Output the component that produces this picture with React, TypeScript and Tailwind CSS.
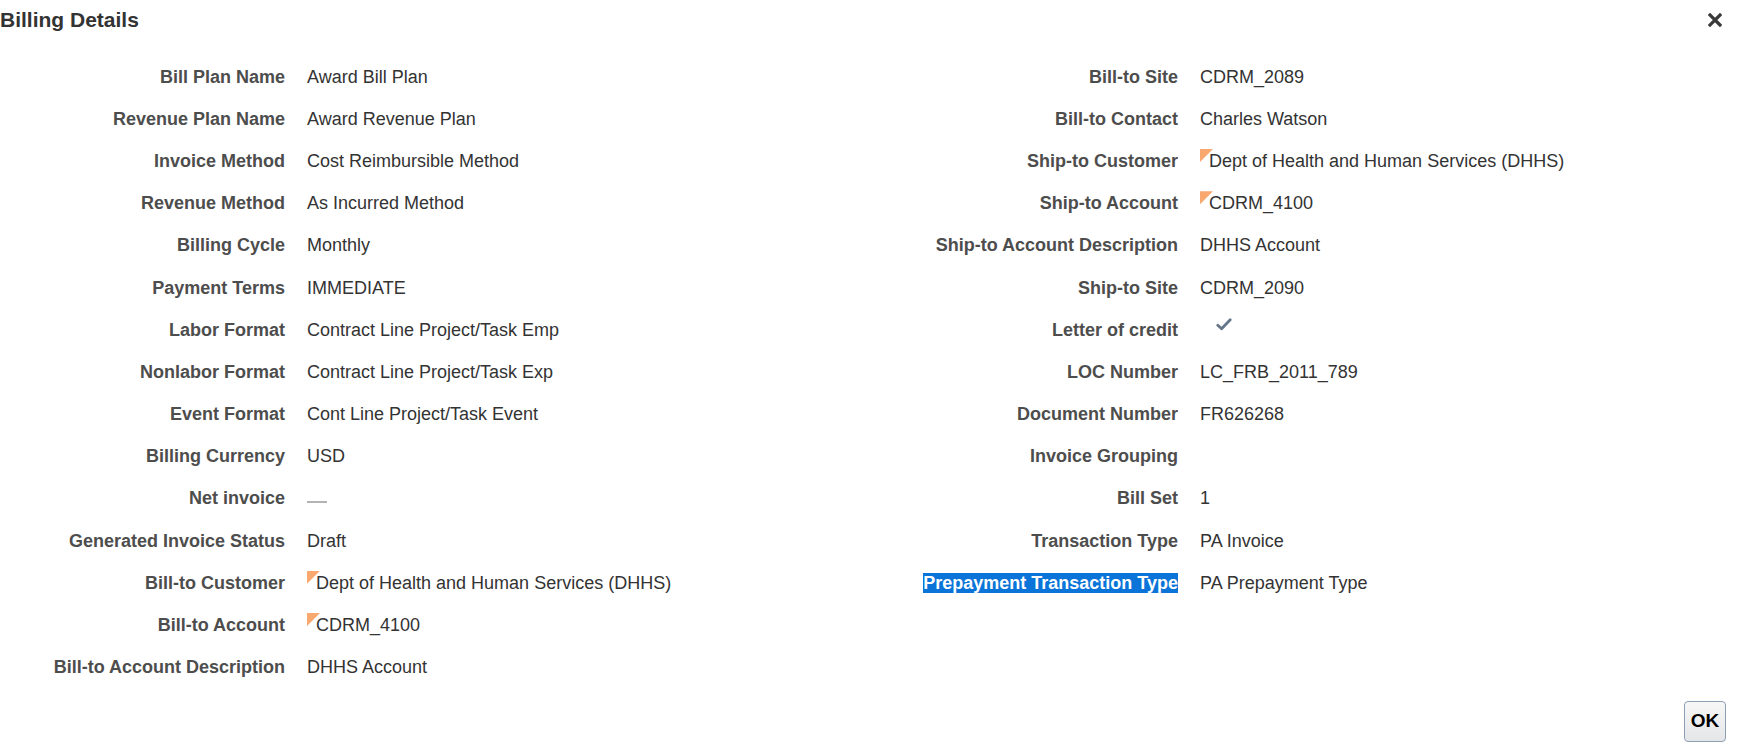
import React from "react";

type Field = {
  label: string;
  value?: string;
  kind?: "text" | "flag" | "check" | "dash" | "empty";
  selected?: boolean;
};

const leftFields: Field[] = [
  { label: "Bill Plan Name", value: "Award Bill Plan" },
  { label: "Revenue Plan Name", value: "Award Revenue Plan" },
  { label: "Invoice Method", value: "Cost Reimbursible Method" },
  { label: "Revenue Method", value: "As Incurred Method" },
  { label: "Billing Cycle", value: "Monthly" },
  { label: "Payment Terms", value: "IMMEDIATE" },
  { label: "Labor Format", value: "Contract Line Project/Task Emp" },
  { label: "Nonlabor Format", value: "Contract Line Project/Task Exp" },
  { label: "Event Format", value: "Cont Line Project/Task Event" },
  { label: "Billing Currency", value: "USD" },
  { label: "Net invoice", kind: "dash" },
  { label: "Generated Invoice Status", value: "Draft" },
  { label: "Bill-to Customer", value: "Dept of Health and Human Services (DHHS)", kind: "flag" },
  { label: "Bill-to Account", value: "CDRM_4100", kind: "flag" },
  { label: "Bill-to Account Description", value: "DHHS Account" },
];

const rightFields: Field[] = [
  { label: "Bill-to Site", value: "CDRM_2089" },
  { label: "Bill-to Contact", value: "Charles Watson" },
  { label: "Ship-to Customer", value: "Dept of Health and Human Services (DHHS)", kind: "flag" },
  { label: "Ship-to Account", value: "CDRM_4100", kind: "flag" },
  { label: "Ship-to Account Description", value: "DHHS Account" },
  { label: "Ship-to Site", value: "CDRM_2090" },
  { label: "Letter of credit", kind: "check" },
  { label: "LOC Number", value: "LC_FRB_2011_789" },
  { label: "Document Number", value: "FR626268" },
  { label: "Invoice Grouping", kind: "empty" },
  { label: "Bill Set", value: "1" },
  { label: "Transaction Type", value: "PA Invoice" },
  { label: "Prepayment Transaction Type", value: "PA Prepayment Type", selected: true },
];

function FieldValue({ field }: { field: Field }) {
  switch (field.kind) {
    case "flag":
      return (
        <span className="relative inline-block pl-[9px] leading-[21px]">
          {/* changed indicator */}
          <span className="absolute left-0 top-[-2px] w-[13px] h-[13px] bg-[#f9a870] [clip-path:polygon(0_0,100%_0,0_100%)]" />
          <span className="relative">{field.value}</span>
        </span>
      );
    case "check":
      return (
        <svg
          width="16"
          height="13"
          viewBox="0 0 16 13"
          className="ml-[16px] -translate-y-[6px]"
        >
          <path d="M1.8 7.2 L5.6 10.8 L14.2 1.8" fill="none" stroke="#66768a" strokeWidth="2.8" strokeLinecap="round" strokeLinejoin="round" />
        </svg>
      );
    case "dash":
      return <span className="block w-[20px] h-[2px] bg-[#b3b3b3] translate-y-[3px]" />;
    case "empty":
      return null;
    default:
      return <span>{field.value}</span>;
  }
}

function FieldColumn({ fields, className }: { fields: Field[]; className?: string }) {
  return (
    <div className={"grid grid-cols-[285px_1fr] gap-x-[22px] auto-rows-[42.2px] " + (className ?? "")}>
      {fields.map((f) => (
        <React.Fragment key={f.label}>
          <div className="flex items-center justify-end font-bold text-[#4d4d4d] whitespace-nowrap">
            {f.selected ? (
              <span className="bg-[#0a74d8] text-white leading-[20px]">{f.label}</span>
            ) : (
              f.label
            )}
          </div>
          <div className="flex items-center text-[#333333] whitespace-nowrap">
            <FieldValue field={f} />
          </div>
        </React.Fragment>
      ))}
    </div>
  );
}

export default function App() {
  return (
    <div className="w-[1743px] h-[750px] bg-white flex flex-col font-['Liberation_Sans',Arial,sans-serif] text-[18px]">
      {/* header */}
      <div className="h-[39px] flex items-center justify-between pr-[21px]">
        <h1 className="text-[21px] font-bold text-[#333333]">Billing Details</h1>
        <button className="w-[14px] h-[14px] flex items-center justify-center">
          <svg width="14" height="14" viewBox="0 0 14 14">
            <path d="M2 2 L12 12 M12 2 L2 12" stroke="#3a3a3a" strokeWidth="3.2" strokeLinecap="square" />
          </svg>
        </button>
      </div>

      {/* form */}
      <div className="flex mt-[17px]">
        <FieldColumn fields={leftFields} className="w-[893px]" />
        <FieldColumn fields={rightFields} className="flex-1 content-start" />
      </div>

      {/* footer */}
      <div className="flex justify-end pr-[17px] mt-[12px]">
        <button className="w-[42px] h-[41px] rounded-[4px] border border-[#8d9fb5] bg-gradient-to-b from-[#f7f7f7] to-[#e5e6e8] text-[19px] font-bold text-black">
          OK
        </button>
      </div>
    </div>
  );
}
